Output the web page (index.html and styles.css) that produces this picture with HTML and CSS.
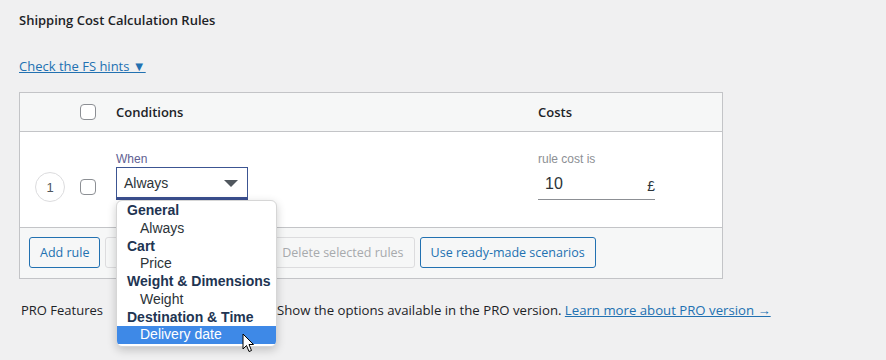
FILE: index.html
```html
<!DOCTYPE html>
<html lang="en">
<head>
    <meta charset="UTF-8">
    <title>Shipping Cost Calculation Rules</title>
    <link rel="stylesheet" href="styles.css">
</head>
<body>

    <h2 class="section-title">Shipping Cost Calculation Rules</h2>

    <a href="#" class="hints-link">Check the FS hints &#9660;</a>

    <div class="rules-card">
        <div class="rules-row rules-head">
            <div class="cell-num"></div>
            <div class="cell-check"><span class="checkbox"></span></div>
            <div class="cell-cond">Conditions</div>
            <div class="cell-cost">Costs</div>
        </div>

        <div class="rules-row rules-body">
            <div class="cell-num"><span class="rule-num">1</span></div>
            <div class="cell-check"><span class="checkbox"></span></div>
            <div class="cell-cond">
                <div class="field-label">When</div>
                <div class="select-wrap">
                    <div class="select-box">
                        <span>Always</span>
                        <span class="select-arrow"></span>
                    </div>

                    <!-- open dropdown -->
                    <ul class="dropdown">
                        <li class="group">General</li>
                        <li class="option">Always</li>
                        <li class="group">Cart</li>
                        <li class="option">Price</li>
                        <li class="group">Weight &amp; Dimensions</li>
                        <li class="option">Weight</li>
                        <li class="group">Destination &amp; Time</li>
                        <li class="option active">Delivery date</li>
                    </ul>

                    <svg class="cursor" width="13" height="21" viewBox="0 0 13 21">
                        <path d="M1 1 L1 16 L4.5 12.5 L7 18.5 L9.5 17.5 L7 11.5 L11.5 11.5 Z" fill="#fff" stroke="#000" stroke-width="1" stroke-linejoin="round"/>
                    </svg>
                </div>
            </div>
            <div class="cell-cost">
                <div class="field-label cost-label">rule cost is</div>
                <div class="cost-input">
                    <span>10</span>
                    <span class="currency">£</span>
                </div>
            </div>
        </div>

        <div class="rules-foot">
            <button class="btn btn-primary-outline">Add rule</button>
            <button class="btn btn-disabled">Duplicate selected rules</button>
            <button class="btn btn-disabled">Delete selected rules</button>
            <button class="btn btn-primary-outline">Use ready-made scenarios</button>
        </div>
    </div>

    <div class="pro-row">
        <div class="pro-label">PRO Features</div>
        <div class="pro-field">
            <span class="checkbox"></span>
            <span>Show the options available in the PRO version. <a href="#">Learn more about PRO version &rarr;</a></span>
        </div>
    </div>

</body>
</html>
```

FILE: styles.css
```css
html {
    background: #f0f0f1;
}

body {
    margin: 0;
    min-height: 360px;
    box-sizing: border-box;
    padding: 10px 19px;
    background: #f0f0f1;
    color: #1d2327;
    font-family: "Open Sans", "Noto Sans", sans-serif;
    font-size: 13px;
}

a {
    color: #2271b1;
}

.section-title {
    margin: 0;
    font-size: 13px;
    font-weight: 600;
    line-height: 20px;
}

.hints-link {
    display: inline-block;
    margin-top: 26px;
    line-height: 20px;
    font-size: 13px;
}

.rules-card {
    margin-top: 16px;
    width: 702px;
    background: #fff;
    border: 1px solid #c3c4c7;
}

.rules-row {
    display: grid;
    grid-template-columns: 60px 36px 422px 184px;
}

.rules-head {
    height: 38px;
    align-items: center;
    background: #f6f7f7;
    border-bottom: 1px solid #c3c4c7;
    font-weight: 600;
    font-size: 13px;
}

.rules-body {
    height: 95px;
    border-bottom: 1px solid #c3c4c7;
}

.checkbox {
    display: block;
    width: 14px;
    height: 14px;
    border: 1px solid #8c8f94;
    border-radius: 4px;
    background: #fff;
}

.rules-body .cell-num {
    padding-top: 40px;
    display: flex;
    justify-content: center;
}

.rules-body .cell-check {
    padding-top: 47px;
}

.rule-num {
    width: 28px;
    height: 28px;
    border: 1px solid #dcdcde;
    border-radius: 50%;
    display: flex;
    align-items: center;
    justify-content: center;
    color: #50575e;
    font-family: "Liberation Sans", Arial, sans-serif;
    font-size: 13px;
}

.rules-body .cell-cond,
.rules-body .cell-cost {
    padding-top: 20px;
}

.field-label {
    font-family: "Liberation Sans", Arial, sans-serif;
    font-size: 12px;
    line-height: 14px;
    color: #5f6192;
    height: 15px;
}

.cost-label {
    color: #8c8f94;
}

.select-wrap {
    position: relative;
    width: 132px;
}

.select-box {
    box-sizing: border-box;
    height: 33px;
    border: 1px solid #3c5592;
    border-bottom: 3px solid #3b4f8f;
    display: flex;
    align-items: center;
    justify-content: space-between;
    padding: 0 9px 0 7px;
    font-family: "Liberation Sans", Arial, sans-serif;
    font-size: 14px;
    color: #2c3338;
}

.select-arrow {
    width: 0;
    height: 0;
    border-left: 7px solid transparent;
    border-right: 7px solid transparent;
    border-top: 7px solid #50575e;
    margin-top: 2px;
}

.dropdown {
    position: absolute;
    top: 33px;
    left: 0;
    width: 159px;
    margin: 0;
    padding: 1px 0 2px;
    list-style: none;
    background: #fff;
    border: 1px solid #d6d6d6;
    border-radius: 6px;
    box-shadow: 0 3px 10px rgba(0, 0, 0, 0.2);
    font-family: "Liberation Sans", Arial, sans-serif;
    font-size: 14px;
    line-height: 17.75px;
    overflow: hidden;
    z-index: 5;
}

.dropdown .group {
    padding-left: 10px;
    font-weight: bold;
    color: #213452;
}

.dropdown .option {
    padding-left: 23px;
    color: #2c3338;
}

.dropdown .option.active {
    background: #3e89e7;
    color: #fff;
}

.cursor {
    position: absolute;
    left: 126px;
    top: 166px;
    z-index: 6;
}

.cost-input {
    width: 110px;
    height: 31px;
    margin-top: 1px;
    border-bottom: 1px solid #8c8f94;
    display: flex;
    align-items: center;
    justify-content: space-between;
    padding: 0 0 0 7px;
    font-family: "Liberation Sans", Arial, sans-serif;
    font-size: 16px;
    color: #2c3338;
}

.currency {
    font-size: 14px;
    margin-top: 4px;
}

.rules-foot {
    display: flex;
    gap: 5px;
    padding: 9px 9px 10px;
    background: #f6f7f7;
}

.btn {
    height: 31px;
    padding: 0 10px;
    border-radius: 3px;
    font-family: "Open Sans", "Noto Sans", sans-serif;
    font-size: 12.5px;
    font-weight: 500;
    cursor: pointer;
}

.btn-primary-outline {
    background: #f6f7f7;
    border: 1px solid #2271b1;
    color: #2271b1;
}

.btn-disabled {
    background: #f6f7f7;
    border: 1px solid #dcdcde;
    color: #a7aaad;
}

.pro-row {
    display: flex;
    align-items: center;
    margin-top: 21px;
    padding-left: 2px;
    line-height: 20px;
}

.pro-label {
    width: 200px;
    font-weight: 500;
}

.pro-field {
    display: flex;
    align-items: center;
    gap: 16px;
    padding-left: 24px;
    font-size: 13.2px;
}
```
